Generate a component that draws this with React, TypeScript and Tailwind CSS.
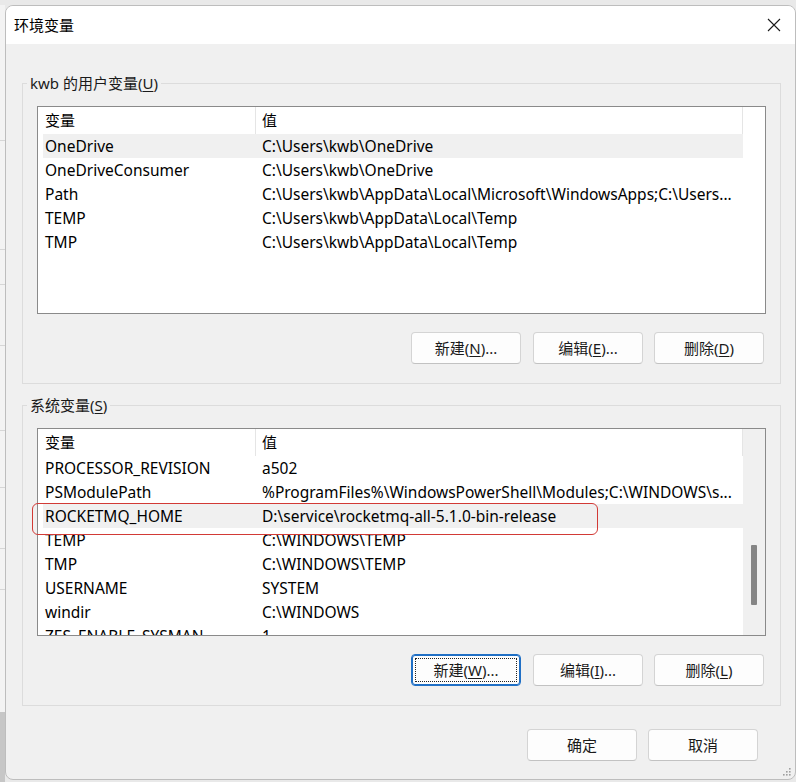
import React from "react";

const FONT = {
  fontFamily: '"Noto Sans", "Noto Sans CJK SC", sans-serif',
};

type Row = { name: string; value: string; sel?: boolean };

const userRows: Row[] = [
  { name: "OneDrive", value: "C:\\Users\\kwb\\OneDrive", sel: true },
  { name: "OneDriveConsumer", value: "C:\\Users\\kwb\\OneDrive" },
  {
    name: "Path",
    value: "C:\\Users\\kwb\\AppData\\Local\\Microsoft\\WindowsApps;C:\\Users...",
  },
  { name: "TEMP", value: "C:\\Users\\kwb\\AppData\\Local\\Temp" },
  { name: "TMP", value: "C:\\Users\\kwb\\AppData\\Local\\Temp" },
];

const sysRows: Row[] = [
  { name: "PROCESSOR_REVISION", value: "a502" },
  {
    name: "PSModulePath",
    value: "%ProgramFiles%\\WindowsPowerShell\\Modules;C:\\WINDOWS\\s...",
  },
  { name: "ROCKETMQ_HOME", value: "D:\\service\\rocketmq-all-5.1.0-bin-release", sel: true },
  { name: "TEMP", value: "C:\\WINDOWS\\TEMP" },
  { name: "TMP", value: "C:\\WINDOWS\\TEMP" },
  { name: "USERNAME", value: "SYSTEM" },
  { name: "windir", value: "C:\\WINDOWS" },
  { name: "ZES_ENABLE_SYSMAN", value: "1" },
];

function Btn({
  label,
  u,
  rest,
  focus,
  extra = "",
}: {
  label: string;
  u?: string;
  rest?: string;
  focus?: boolean;
  extra?: string;
}) {
  return (
    <div
      className={
        "w-[110px] h-[32px] rounded-[4px] bg-[#fdfdfd] flex items-center justify-center text-[15px] text-[#1a1a1a] " +
        (focus
          ? "border border-[#1f6fc5] shadow-[0_0_0_1px_#1f6fc5_inset] "
          : "border border-[#d4d4d4] border-b-[#c2c2c2] ") +
        extra
      }
    >
      <div
        className={
          "flex items-center justify-center " +
          (focus ? "w-[102px] h-[24px] border border-dotted border-[#222]" : "")
        }
      >
        <span className="leading-[20px]">
          {label}
          {u !== undefined && (
            <>
              (<span className="underline underline-offset-2">{u}</span>){rest}
            </>
          )}
        </span>
      </div>
    </div>
  );
}

function ListView({ rows, scroll }: { rows: Row[]; scroll?: boolean }) {
  return (
    <div className="relative w-[729px] h-[208px] border border-[#8a8a8a] bg-white flex overflow-hidden">
      <div className="flex-1 pl-[5px] overflow-hidden">
        <div className="flex h-[27px] items-center text-[15px] text-black">
          <div className="w-[213px] pl-[2px] h-full flex items-center border-r border-[#e5e5e5]">
            变量
          </div>
          <div className="flex-1 pl-[6px] h-full flex items-center border-r border-[#e5e5e5]">
            值
          </div>
        </div>
        {rows.map((r, i) => (
          <div
            key={i}
            className={
              "flex h-[24px] pt-[2px] items-center text-[15.5px] text-black whitespace-nowrap " +
              (r.sel ? "bg-[#f0f0f0]" : "")
            }
          >
            <div className="w-[213px] pl-[2px] overflow-hidden">{r.name}</div>
            <div className="flex-1 pl-[6px] overflow-hidden">{r.value}</div>
          </div>
        ))}
      </div>
      <div className={"w-[22px] h-full flex flex-col " + (scroll ? "bg-[#f0f0f0]" : "bg-white")}>
        {scroll && (
          <>
            <div className="h-[116px]" />
            <div className="ml-[8px] w-[6px] h-[60px] bg-[#858585] rounded-[1px]" />
          </>
        )}
      </div>
    </div>
  );
}

function Group({
  title,
  u,
  rows,
  scroll,
  buttons,
  children,
}: {
  title: string;
  u: string;
  rows: Row[];
  scroll?: boolean;
  buttons: React.ReactNode;
  children?: React.ReactNode;
}) {
  return (
    <fieldset className="relative w-[759px] border border-[#dcdcdc] px-[14px] pb-[19px]">
      <legend className="-ml-[10px] px-[3px] text-[15px] leading-[20px] text-[#1a1a1a]">
        {title}(<span className="underline underline-offset-2">{u}</span>)
      </legend>
      <div className="mt-[13px]">
        <ListView rows={rows} scroll={scroll} />
      </div>
      <div className="mt-[18px] flex justify-end pr-[2px] gap-[11px]">{buttons}</div>
      {children}
    </fieldset>
  );
}

export default function App() {
  return (
    <div style={FONT} className="w-[796px] h-[782px] bg-[#e9e9e9] flex overflow-hidden">
      {/* background window strip */}
      <div className="w-[5px] h-full flex flex-col">
        <div className="h-[5px] bg-[#e9e9e9]" />
        <div className="flex-1 bg-[#f3f3f3] flex flex-col">
          <div className="h-[135px]" />
          <div className="h-px bg-[#d6d6d6]" />
          <div className="h-[108px]" />
          <div className="h-px bg-[#d6d6d6]" />
          <div className="h-[34px]" />
          <div className="h-px bg-[#d6d6d6]" />
          <div className="h-[60px]" />
          <div className="h-px bg-[#d6d6d6]" />
          <div className="h-[84px]" />
          <div className="h-px bg-[#d6d6d6]" />
          <div className="h-[56px]" />
          <div className="h-px bg-[#d6d6d6]" />
          <div className="h-[60px]" />
          <div className="h-px bg-[#d6d6d6]" />
          <div className="h-[40px]" />
          <div className="h-px bg-[#d6d6d6]" />
          <div className="flex-1" />
          <div className="h-[70px] bg-[#c6c6c6]" />
        </div>
      </div>
      {/* dialog */}
      <div className="pt-[5px] flex flex-col">
        <div className="w-[791px] h-[775px] rounded-[8px] border border-[#bdbdbd] bg-[#f0f0f0] overflow-hidden flex flex-col text-[#1a1a1a]">
          <div className="h-[38px] bg-white flex items-center justify-between pl-[8px] pr-[13px] shrink-0">
            <span className="text-[15px] leading-[20px] text-black">环境变量</span>
            <svg width="14" height="14" viewBox="0 0 14 14" className="mr-[1px]">
              <path d="M1 1 L13 13 M13 1 L1 13" stroke="#1a1a1a" strokeWidth="1.1" />
            </svg>
          </div>
          <div className="pl-[16px] pt-[29px] flex flex-col">
            <Group
              title="kwb 的用户变量"
              u="U"
              rows={userRows}
              buttons={
                <>
                  <Btn label="新建" u="N" rest="..." />
                  <Btn label="编辑" u="E" rest="..." extra="ml-[1px]" />
                  <Btn label="删除" u="D" />
                </>
              }
            />
            <div className="h-[11px]" />
            <Group
              title="系统变量"
              u="S"
              rows={sysRows}
              scroll
              buttons={
                <>
                  <Btn label="新建" u="W" rest="..." focus />
                  <Btn label="编辑" u="I" rest="..." extra="ml-[1px]" />
                  <Btn label="删除" u="L" />
                </>
              }
            >
              <div className="absolute left-[9px] top-[88px] w-[566px] h-[32px] border-[1.5px] border-[#d23a36] rounded-[6px] pointer-events-none" />
            </Group>
            <div className="mt-[23px] flex justify-end pr-[37px] gap-[11px]">
              <Btn label="确定" />
              <Btn label="取消" />
            </div>
          </div>
          <div className="flex-1" />
          <div className="flex justify-end pr-[4px] pb-[2px]">
            <svg width="12" height="10" viewBox="0 0 12 10">
              {[
                [10, 1],
                [10, 4],
                [7, 4],
                [10, 7],
                [7, 7],
                [4, 7],
              ].map(([x, y], i) => (
                <rect key={i} x={x} y={y} width="1.6" height="1.6" fill="#a0a0a0" />
              ))}
            </svg>
          </div>
        </div>
      </div>
    </div>
  );
}
